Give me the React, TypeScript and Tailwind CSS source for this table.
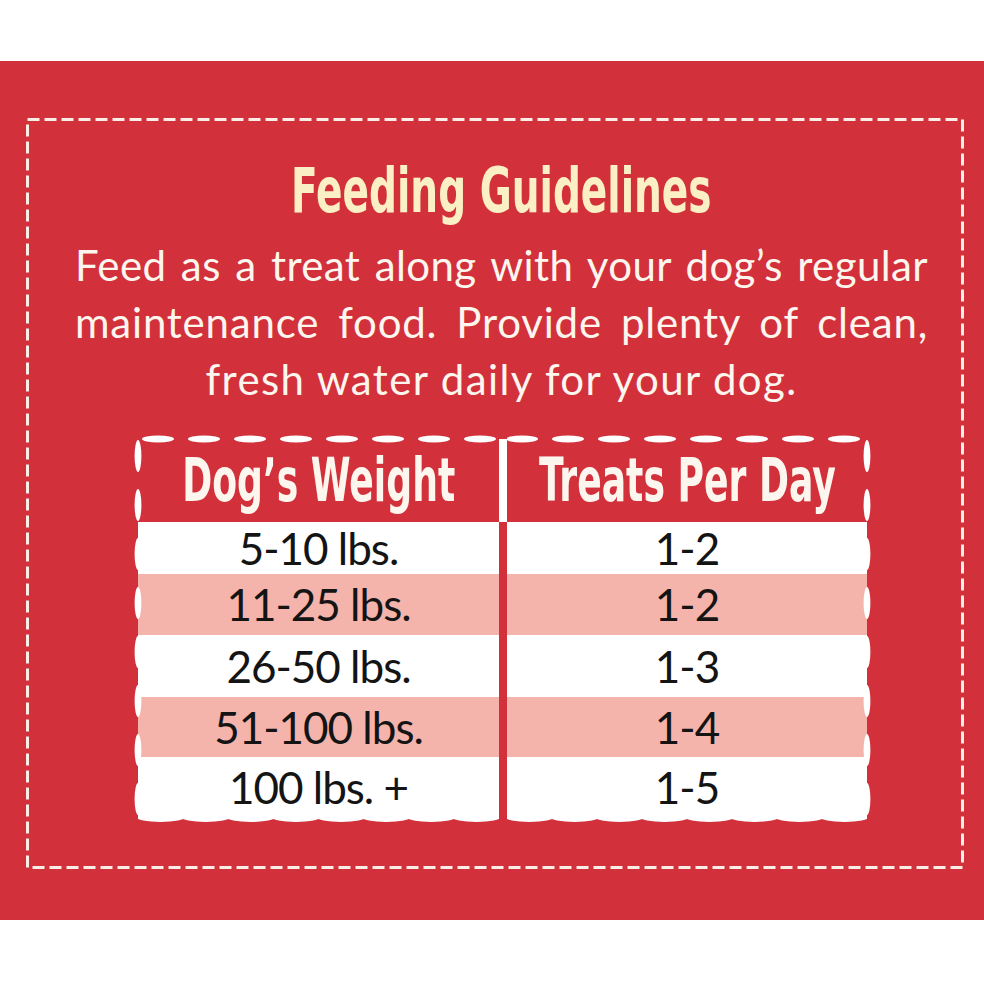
import React from 'react';

const RED = 'bg-[#d2303b]';

const rows = [
  { weight: '5-10 lbs.', treats: '1-2', h: 'h-[52px] leading-[52px]', pink: false },
  { weight: '11-25 lbs.', treats: '1-2', h: 'h-[61px] leading-[61px]', pink: true },
  { weight: '26-50 lbs.', treats: '1-3', h: 'h-[62px] leading-[62px]', pink: false },
  { weight: '51-100 lbs.', treats: '1-4', h: 'h-[60px] leading-[60px]', pink: true },
  { weight: '100 lbs. +', treats: '1-5', h: 'h-[60px] leading-[60px]', pink: false },
];

// stitched lens marks along the top of a column
const TopStitches = ({ width, start }: { width: number; start: number }) => (
  <svg className="absolute left-0 -top-[4px] pointer-events-none" width={width} height={8}>
    {Array.from({ length: 8 }).map((_, i) => (
      <ellipse key={i} cx={start + i * 46} cy={4} rx={16} ry={3.4} fill="#fff" />
    ))}
  </svg>
);

// scalloped bumps along a side edge
const SideBumps = ({ side }: { side: 'left' | 'right' }) => (
  <svg
    className={
      side === 'left'
        ? 'absolute -left-[4px] top-0 pointer-events-none'
        : 'absolute -right-[4px] top-0 pointer-events-none'
    }
    width={8}
    height={378}
  >
    {Array.from({ length: 8 }).map((_, i) => (
      <ellipse key={i} cx={4} cy={17 + i * 49} rx={3.4} ry={16} fill="#fff" />
    ))}
  </svg>
);

// wavy bottom edge
const BottomWave = ({ width }: { width: number }) => {
  const n = Math.round(width / 45);
  const w = width / n;
  return (
    <svg className="absolute left-0 top-full -mt-[4px] pointer-events-none" width={width} height={10}>
      {Array.from({ length: n }).map((_, i) => (
        <ellipse key={i} cx={w / 2 + i * w} cy={4} rx={w / 2 + 2} ry={5} fill="#fff" />
      ))}
    </svg>
  );
};

const Column = ({
  title,
  side,
  width,
  pick,
}: {
  title: string;
  side: 'left' | 'right';
  width: number;
  pick: 'weight' | 'treats';
}) => (
  <div className="relative flex flex-col" style={{ width }}>
    <div className="h-[83px] leading-[83px] flex justify-center text-[#fdf6ee] text-[60px] font-bold font-['DejaVu_Sans_Condensed','DejaVu_Sans',sans-serif]">
      <span className="shrink-0 inline-block scale-x-[0.67] whitespace-nowrap">{title}</span>
    </div>
    {rows.map(r => (
      <div
        key={r.weight}
        className={`${r.h} ${r.pink ? 'bg-[#f4b3ab]' : 'bg-white'} text-center text-[44px] tracking-[-1px] text-[#141414] font-['Lato',sans-serif]`}
      >
        {r[pick]}
      </div>
    ))}
    <TopStitches width={width} start={side === 'left' ? 20 : 15} />
    <SideBumps side={side} />
    <BottomWave width={width} />
  </div>
);

export default function App() {
  return (
    <div className="bg-white w-[984px] h-[984px] pt-[61px] overflow-hidden">
      <div className={`${RED} h-[859px] pt-[57px]`}>
        <div className="relative ml-[26px] w-[938px] h-[751px] pt-[38px]">
          <svg className="absolute inset-0 pointer-events-none" width={938} height={751}>
            <rect
              x={1.5}
              y={1.5}
              width={935}
              height={748}
              fill="none"
              stroke="#fbeee6"
              strokeWidth={3}
              strokeDasharray="12 5"
            />
          </svg>

          <div className="ml-[49px] w-[853px]">
            <h1 className="flex justify-center text-[62px] leading-[70px] font-bold text-[#fbefc6] font-['DejaVu_Sans_Condensed','DejaVu_Sans',sans-serif]">
              <span className="shrink-0 inline-block scale-x-[0.7] whitespace-nowrap">Feeding Guidelines</span>
            </h1>

            <div className="mt-[11px] text-[42px] leading-[57px] text-[#fdf6ee] font-['Lato',sans-serif]">
              <p className="text-justify [text-align-last:justify] tracking-[0.4px]">Feed as a treat along with your dog’s regular</p>
              <p className="text-justify [text-align-last:justify] tracking-[0.8px]">maintenance food. Provide plenty of clean,</p>
              <p className="text-center tracking-[1.4px]">fresh water daily for your dog.</p>
            </div>

            <div className="ml-[63px] mt-[31px] flex w-[729px]">
              <Column title="Dog’s Weight" side="left" width={361} pick="weight" />
              <div className="w-[8px] flex flex-col">
                <div className="h-[83px] bg-white" />
              </div>
              <Column title="Treats Per Day" side="right" width={360} pick="treats" />
            </div>
          </div>
        </div>
      </div>
    </div>
  );
}
